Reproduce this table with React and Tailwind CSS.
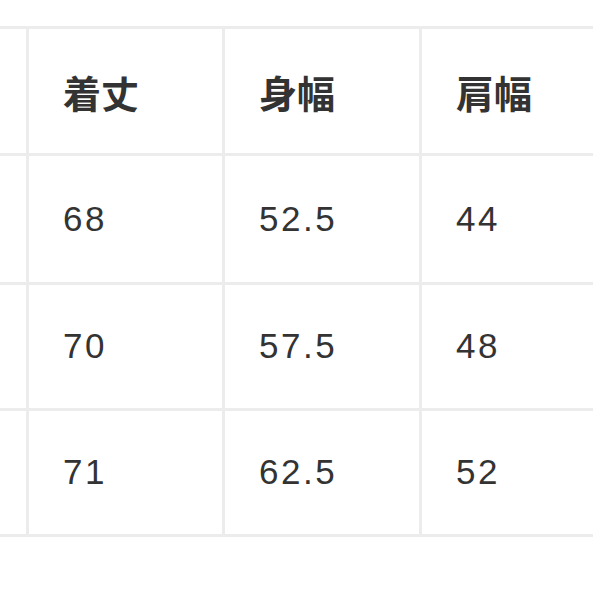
const rows = [
  { size: "S", length: "68", width: "52.5", shoulder: "44" },
  { size: "M", length: "70", width: "57.5", shoulder: "48" },
  { size: "L", length: "71", width: "62.5", shoulder: "52" },
]

const headers = ["着丈", "身幅", "肩幅"]

const Cell = ({ children, head }) => (
  <div
    className={
      "flex items-center bg-white pl-[34px] text-[#333] " +
      (head
        ? "font-['Noto_Sans_CJK_JP',sans-serif] text-[38px] font-bold"
        : "font-['Liberation_Sans',Arial,sans-serif] text-[35px] tracking-[2.5px]")
    }
  >
    {children}
  </div>
)

export default function App() {
  return (
    <div className="h-[593px] w-[593px] overflow-hidden bg-white">
      <div className="ml-[-171px] mt-[26px] grid w-max grid-cols-[194px_193px_194px_194px_194px] grid-rows-[124px_126px_123px_123px] gap-[3px] bg-[#ececec] p-[3px]">
        <Cell head />
        {headers.map((h) => (
          <Cell key={h} head>
            {h}
          </Cell>
        ))}
        <Cell head />
        {rows.map((r) => (
          <>
            <Cell key={r.size + "s"} />
            <Cell key={r.size + "l"}>{r.length}</Cell>
            <Cell key={r.size + "w"}>{r.width}</Cell>
            <Cell key={r.size + "h"}>{r.shoulder}</Cell>
            <Cell key={r.size + "v"} />
          </>
        ))}
      </div>
    </div>
  )
}
